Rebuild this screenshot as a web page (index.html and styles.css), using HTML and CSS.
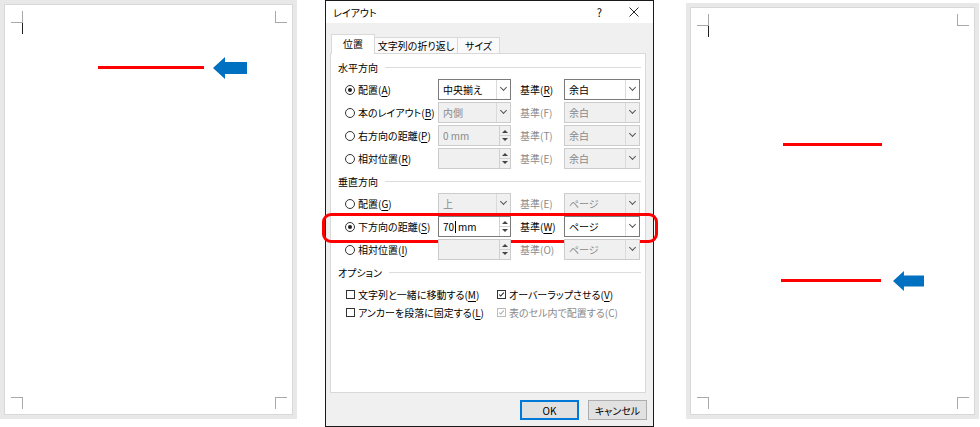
FILE: index.html
```html
<!DOCTYPE html>
<html lang="ja">
<head>
    <meta charset="UTF-8">
    <meta name="viewport" content="width=device-width, initial-scale=1.0">
    <title>レイアウト</title>
    <link rel="stylesheet" href="styles.css">
</head>
<body>

<!-- before -->
<div class="page page-left">
    <div class="mark mark-tl"></div>
    <div class="mark mark-tr"></div>
    <div class="mark mark-bl"></div>
    <div class="mark mark-br"></div>
    <div class="doc-caret"></div>
    <div class="shape-line line-a"></div>
    <svg class="arrow arrow-a" viewBox="0 0 34 22" preserveAspectRatio="none"><polygon points="0,11 12,0 12,5 34,5 34,17 12,17 12,22"/></svg>
</div>

<div class="dialog">
    <div class="titlebar">
        <span class="title">レイアウト</span>
        <span class="help">?</span>
        <svg class="close" viewBox="0 0 10 10"><path d="M0.5 0.5L9.5 9.5M9.5 0.5L0.5 9.5"/></svg>
    </div>
    <div class="tabs">
        <div class="tab tab-pos active">位置</div>
        <div class="tab tab-wrap">文字列の折り返し</div>
        <div class="tab tab-size">サイズ</div>
    </div>
    <div class="panel">
        <div class="group">水平方向</div>
        <div class="row">
            <div class="opt"><span class="radio on"></span>配置(<u>A</u>)</div>
            <div class="combo"><span>中央揃え</span><b></b></div>
            <span class="base">基準(<u>R</u>)</span>
            <div class="combo"><span>余白</span><b></b></div>
        </div>
        <div class="row">
            <div class="opt"><span class="radio"></span>本のレイアウト(<u>B</u>)</div>
            <div class="combo off"><span>内側</span><b></b></div>
            <span class="base off">基準(F)</span>
            <div class="combo off"><span>余白</span><b></b></div>
        </div>
        <div class="row">
            <div class="opt"><span class="radio"></span>右方向の距離(<u>P</u>)</div>
            <div class="combo off"><span>0 mm</span><i class="spin"></i></div>
            <span class="base off">基準(T)</span>
            <div class="combo off"><span>余白</span><b></b></div>
        </div>
        <div class="row">
            <div class="opt"><span class="radio"></span>相対位置(<u>R</u>)</div>
            <div class="combo off"><span></span><i class="spin"></i></div>
            <span class="base off">基準(E)</span>
            <div class="combo off"><span>余白</span><b></b></div>
        </div>

        <div class="group">垂直方向</div>
        <div class="row">
            <div class="opt"><span class="radio"></span>配置(<u>G</u>)</div>
            <div class="combo off"><span>上</span><b></b></div>
            <span class="base off">基準(E)</span>
            <div class="combo off"><span>ページ</span><b></b></div>
        </div>
        <div class="row">
            <div class="opt"><span class="radio on"></span>下方向の距離(<u>S</u>)</div>
            <div class="combo"><span>70<em class="caret"></em>mm</span><i class="spin"></i></div>
            <span class="base">基準(<u>W</u>)</span>
            <div class="combo"><span>ページ</span><b></b></div>
            <div class="highlight"></div>
        </div>
        <div class="row">
            <div class="opt"><span class="radio"></span>相対位置(<u>I</u>)</div>
            <div class="combo off"><span></span><i class="spin"></i></div>
            <span class="base off">基準(O)</span>
            <div class="combo off"><span>ページ</span><b></b></div>
        </div>

        <div class="group">オプション</div>
        <div class="checks">
            <div class="chk"><span class="box"></span>文字列と一緒に移動する(<u>M</u>)</div>
            <div class="chk"><span class="box on"><svg viewBox="0 0 9 9"><path d="M1.5 4.5L3.5 6.5L7.5 2"/></svg></span>オーバーラップさせる(<u>V</u>)</div>
            <div class="chk"><span class="box"></span>アンカーを段落に固定する(<u>L</u>)</div>
            <div class="chk off"><span class="box on"><svg viewBox="0 0 9 9"><path d="M1.5 4.5L3.5 6.5L7.5 2"/></svg></span>表のセル内で配置する(C)</div>
        </div>
    </div>
    <div class="buttons">
        <button class="btn btn-ok">OK</button>
        <button class="btn">キャンセル</button>
    </div>
</div>

<!-- after -->
<div class="page page-right">
    <div class="mark mark-tl"></div>
    <div class="mark mark-tr"></div>
    <div class="mark mark-bl"></div>
    <div class="mark mark-br"></div>
    <div class="doc-caret"></div>
    <div class="shape-line line-b"></div>
    <div class="shape-line line-c"></div>
    <svg class="arrow arrow-b" viewBox="0 0 34 22" preserveAspectRatio="none"><polygon points="0,11 12,0 12,5 34,5 34,17 12,17 12,22"/></svg>
</div>

</body>
</html>
```

FILE: styles.css
```css
* {
    box-sizing: border-box;
}

body {
    margin: 0;
    width: 980px;
    height: 427px;
    overflow: hidden;
    background: #fff;
    display: flex;
    align-items: flex-start;
    font-family: "Noto Sans CJK JP", "Noto Sans", sans-serif;
    font-size: 10px;
    font-feature-settings: "palt";
    color: #000;
}

u {
    text-decoration-thickness: 1px;
    text-underline-offset: 2px;
}

/* word pages */
.page {
    position: relative;
    background: #fff;
    border: 4px solid #e8e8e8;
    box-shadow: inset 0 0 0 1px #d8d8d8;
}
.page-left {
    width: 297px;
    height: 419px;
}
.page-right {
    width: 293px;
    height: 416px;
    margin-top: 3px;
    margin-left: 32px;
}

.mark {
    position: absolute;
    width: 12px;
    height: 12px;
    border: 0 solid #a9a9a9;
}
.mark-tl { left: 7px; top: 7px; border-right-width: 1px; border-bottom-width: 1px; }
.mark-tr { right: 6px; top: 7px; border-left-width: 1px; border-bottom-width: 1px; }
.mark-bl { left: 7px; bottom: 6px; border-right-width: 1px; border-top-width: 1px; }
.mark-br { right: 6px; bottom: 6px; border-left-width: 1px; border-top-width: 1px; }

.doc-caret {
    position: absolute;
    left: 18px;
    top: 19px;
    width: 1px;
    height: 11px;
    background: #222;
}

.shape-line {
    position: absolute;
    height: 3px;
    background: #ff0000;
}
.line-a { left: 94px; top: 62px; width: 106px; }
.line-b { left: 93px; top: 136px; width: 99px; }
.line-c { left: 91px; top: 272px; width: 100px; }

.arrow {
    position: absolute;
    fill: #0070c0;
}
.arrow-a { left: 209px; top: 53px; width: 34px; height: 22px; }
.arrow-b { left: 203px; top: 264px; width: 31px; height: 20px; }

/* dialog */
.dialog {
    width: 329px;
    height: 427px;
    margin-left: 28px;
    border: 1px solid #1a1a1a;
    background: #f0f0f0;
    display: flex;
    flex-direction: column;
}

.titlebar {
    height: 22px;
    flex-shrink: 0;
    background: #fff;
    display: flex;
    align-items: center;
    padding: 0 14px 0 7px;
}
.title {
    flex: 1;
}
.help {
    font-size: 11px;
    margin-right: 27px;
}
.close {
    width: 10px;
    height: 10px;
    stroke: #222;
    stroke-width: 1;
    fill: none;
}

.tabs {
    display: flex;
    align-items: flex-end;
    height: 19px;
    margin-top: 11px;
    padding-left: 5px;
}
.tab {
    height: 16px;
    line-height: 15px;
    text-align: center;
    background: #fafafa;
    border: 1px solid #d9d9d9;
    border-bottom: none;
}
.tab + .tab {
    margin-left: -1px;
}
.tab.active {
    position: relative;
    z-index: 1;
    height: 20px;
    line-height: 18px;
    margin-bottom: -1px;
    background: #fff;
}
.tab-pos { width: 44px; }
.tab-wrap { width: 84px; }
.tab-size { width: 43px; }

.panel {
    height: 340px;
    flex-shrink: 0;
    margin: 0 7px 0 4px;
    padding-top: 2px;
    background: #fff;
    border: 1px solid #d9d9d9;
}

.group {
    height: 22px;
    display: flex;
    align-items: center;
    padding: 0 4px 0 7px;
}
.group::after {
    content: "";
    flex: 1;
    height: 1px;
    margin-left: 7px;
    background: #dcdcdc;
}

.row {
    position: relative;
    height: 23px;
    display: grid;
    grid-template-columns: 93px 73px 53px 76px;
    align-items: center;
    padding-left: 14px;
}
.opt {
    display: flex;
    align-items: center;
    white-space: nowrap;
}
.radio {
    position: relative;
    width: 10px;
    height: 10px;
    margin-right: 3px;
    border: 1px solid #333;
    border-radius: 50%;
}
.radio.on::after {
    content: "";
    position: absolute;
    left: 2px;
    top: 2px;
    width: 4px;
    height: 4px;
    border-radius: 50%;
    background: #222;
}
.base {
    padding-left: 9px;
    white-space: nowrap;
}
.off {
    color: #8a8a8a;
}

.combo {
    height: 21px;
    display: flex;
    background: #fff;
    border: 1px solid #7a7a7a;
}
.combo span {
    flex: 1;
    padding-left: 4px;
    line-height: 19px;
    white-space: nowrap;
}
.combo b {
    position: relative;
    width: 14px;
    border-left: 1px solid #dadada;
}
.combo b::after {
    content: "";
    position: absolute;
    left: 4px;
    top: 5px;
    width: 4px;
    height: 4px;
    border-right: 1px solid #555;
    border-bottom: 1px solid #555;
    transform: rotate(45deg);
}
.combo.off {
    background: #f0f0f0;
    border-color: #cccccc;
}

.spin {
    position: relative;
    width: 11px;
    border-left: 1px solid #d0d0d0;
    background: linear-gradient(#d0d0d0, #d0d0d0) 0 50% / 100% 1px no-repeat;
}
.spin::before,
.spin::after {
    content: "";
    position: absolute;
    left: 2px;
    border-left: 3px solid transparent;
    border-right: 3px solid transparent;
}
.spin::before {
    top: 4px;
    border-bottom: 3px solid #444;
}
.spin::after {
    bottom: 4px;
    border-top: 3px solid #444;
}

.caret {
    display: inline-block;
    width: 1px;
    height: 12px;
    margin: 0 2px 0 1px;
    vertical-align: -2px;
    background: #000;
}

.highlight {
    position: absolute;
    left: -9px;
    right: -13px;
    top: -2px;
    bottom: -5px;
    border: 3px solid #ff0000;
    border-radius: 9px;
}

.checks {
    display: grid;
    grid-template-columns: 151px 1fr;
    padding: 2px 0 0 15px;
}
.chk {
    height: 18px;
    display: flex;
    align-items: center;
    white-space: nowrap;
}
.box {
    width: 9px;
    height: 9px;
    margin-right: 3px;
    border: 1px solid #333;
    flex-shrink: 0;
}
.box svg {
    display: block;
    width: 7px;
    height: 7px;
    fill: none;
    stroke: #222;
    stroke-width: 1.3;
}
.chk.off .box {
    border-color: #bcbcbc;
}
.chk.off .box svg {
    stroke: #a8a8a8;
}

.buttons {
    display: flex;
    justify-content: flex-end;
    gap: 9px;
    margin-top: 7px;
    padding-right: 6px;
}
.btn {
    width: 59px;
    height: 20px;
    padding: 0;
    font: inherit;
    color: #000;
    background: #e1e1e1;
    border: 1px solid #adadad;
}
.btn-ok {
    border-color: #0078d7;
    box-shadow: inset 0 0 0 1px #0078d7;
}
```
